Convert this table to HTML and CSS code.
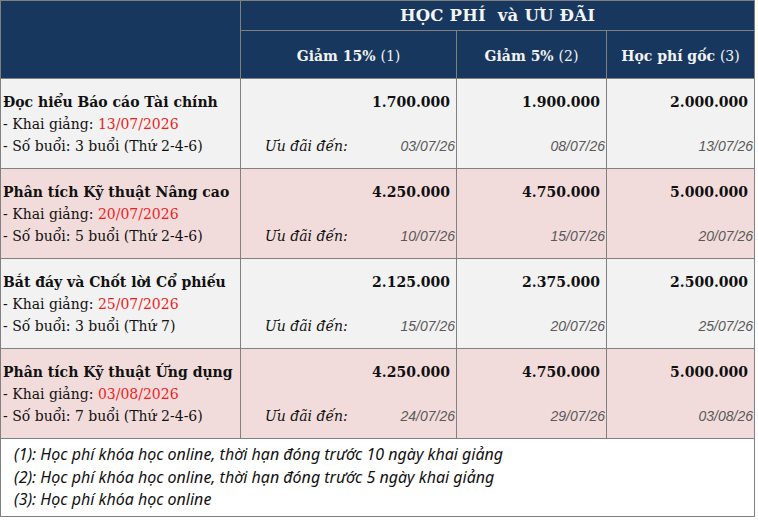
FILE: index.html
```html
<!DOCTYPE html>
<html lang="vi">
<head>
<meta charset="utf-8">
<title>Học phí và ưu đãi</title>
<link rel="stylesheet" href="styles.css">
</head>
<body>
<table class="fees">
  <colgroup><col class="c1"><col class="c2"><col class="c3"><col class="c4"></colgroup>
  <thead>
    <tr class="h1">
      <th class="blank" rowspan="2"></th>
      <th class="title" colspan="3">HỌC PHÍ&nbsp; và ƯU ĐÃI</th>
    </tr>
    <tr class="h2">
      <th>Giảm 15% <span class="note">(1)</span></th>
      <th>Giảm 5% <span class="note">(2)</span></th>
      <th>Học phí gốc <span class="note">(3)</span></th>
    </tr>
  </thead>
  <tbody>
    <tr class="row grey">
      <td class="course"><div class="name">Đọc hiểu Báo cáo Tài chính</div><div>- Khai giảng: <span class="red">13/07/2026</span></div><div>- Số buổi: 3 buổi (Thứ 2-4-6)</div></td>
      <td class="price"><div class="amt">1.700.000</div><div class="until"><span class="lbl">Ưu đãi đến:</span><span class="date">03/07/26</span></div></td>
      <td class="price"><div class="amt">1.900.000</div><div class="until"><span class="date">08/07/26</span></div></td>
      <td class="price"><div class="amt">2.000.000</div><div class="until"><span class="date">13/07/26</span></div></td>
    </tr>
    <tr class="row pink">
      <td class="course"><div class="name">Phân tích Kỹ thuật Nâng cao</div><div>- Khai giảng: <span class="red">20/07/2026</span></div><div>- Số buổi: 5 buổi (Thứ 2-4-6)</div></td>
      <td class="price"><div class="amt">4.250.000</div><div class="until"><span class="lbl">Ưu đãi đến:</span><span class="date">10/07/26</span></div></td>
      <td class="price"><div class="amt">4.750.000</div><div class="until"><span class="date">15/07/26</span></div></td>
      <td class="price"><div class="amt">5.000.000</div><div class="until"><span class="date">20/07/26</span></div></td>
    </tr>
    <tr class="row grey">
      <td class="course"><div class="name">Bắt đáy và Chốt lời Cổ phiếu</div><div>- Khai giảng: <span class="red">25/07/2026</span></div><div>- Số buổi: 3 buổi (Thứ 7)</div></td>
      <td class="price"><div class="amt">2.125.000</div><div class="until"><span class="lbl">Ưu đãi đến:</span><span class="date">15/07/26</span></div></td>
      <td class="price"><div class="amt">2.375.000</div><div class="until"><span class="date">20/07/26</span></div></td>
      <td class="price"><div class="amt">2.500.000</div><div class="until"><span class="date">25/07/26</span></div></td>
    </tr>
    <tr class="row pink">
      <td class="course"><div class="name">Phân tích Kỹ thuật Ứng dụng</div><div>- Khai giảng: <span class="red">03/08/2026</span></div><div>- Số buổi: 7 buổi (Thứ 2-4-6)</div></td>
      <td class="price"><div class="amt">4.250.000</div><div class="until"><span class="lbl">Ưu đãi đến:</span><span class="date">24/07/26</span></div></td>
      <td class="price"><div class="amt">4.750.000</div><div class="until"><span class="date">29/07/26</span></div></td>
      <td class="price"><div class="amt">5.000.000</div><div class="until"><span class="date">03/08/26</span></div></td>
    </tr>
    <tr class="foot">
      <td colspan="4">
        <div>(1): Học phí khóa học online, thời hạn đóng trước 10 ngày khai giảng</div>
        <div>(2): Học phí khóa học online, thời hạn đóng trước 5 ngày khai giảng</div>
        <div>(3): Học phí khóa học online</div>
      </td>
    </tr>
  </tbody>
</table>
</body>
</html>
```

FILE: styles.css
```css
html, body {
  margin: 0;
  padding: 0;
  background: #ffffff;
}

body {
  font-family: "DejaVu Serif", "Liberation Serif", serif;
  color: #111111;
}

.fees {
  border-collapse: collapse;
  table-layout: fixed;
  width: 754px;
}

.c1 { width: 240px; }
.c2 { width: 216px; }
.c3 { width: 150px; }
.c4 { width: 148px; }

.fees th,
.fees td {
  border: 1px solid #808080;
  padding: 0;
}

.fees thead th {
  background: #17375e;
  color: #f2f2f2;
  font-weight: bold;
}

.h1 th.title {
  height: 29px;
  font-size: 16.5px;
  color: #f4f4f4;
  letter-spacing: 0.2px;
}

.h2 th {
  height: 45px;
  font-size: 14px;
  padding-top: 2px;
}

.h2 .note {
  font-weight: normal;
}

.row td {
  vertical-align: top;
  padding: 12px 2px 11px;
  line-height: 22px;
  font-size: 14px;
}

.grey td { background: #f2f2f2; }
.pink td { background: #f2dcdb; }

.course .name {
  font-weight: bold;
  font-size: 14px;
  white-space: nowrap;
}

.red { color: #f01c1c; }

.price .amt {
  font-weight: bold;
  text-align: right;
  padding-right: 4px;
}

.price .until {
  display: flex;
  justify-content: flex-end;
  align-items: baseline;
  margin-top: 22px;
}

.price .lbl {
  margin-left: 22px;
  margin-right: auto;
  font-style: italic;
}

.price .date {
  font-family: "Liberation Sans", Arial, sans-serif;
  font-style: italic;
  font-size: 14px;
  color: #595959;
  margin-right: -1px;
}

.foot td {
  background: #ffffff;
  padding: 4px 14px 5px 13px;
  font-family: "Noto Sans", "Open Sans", sans-serif;
  font-style: italic;
  font-size: 16px;
  line-height: 22.5px;
  color: #111111;
}
```
